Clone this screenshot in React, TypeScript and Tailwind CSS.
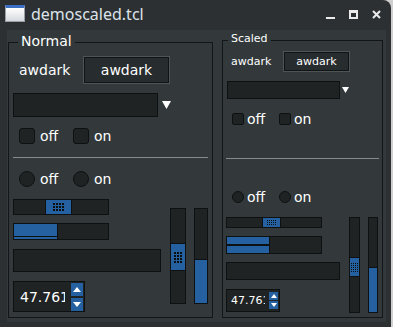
import React from 'react';

const FIELD = 'border border-[#0e1112] bg-[#1f2324]';
const BLUE = 'bg-[#2561a1]';

type GripKind = 'lgH' | 'lgV' | 'smH' | 'smV';

const GRIPS: Record<GripKind, { grid: string; dot: string; n: number }> = {
  lgH: { grid: 'grid grid-cols-4 gap-px', dot: 'w-[2px] h-[2px]', n: 12 },
  lgV: { grid: 'grid grid-cols-3 gap-px', dot: 'w-[2px] h-[2px]', n: 12 },
  smH: { grid: 'grid grid-cols-5 gap-px', dot: 'w-px h-px', n: 15 },
  smV: { grid: 'grid grid-cols-4 gap-px', dot: 'w-px h-px', n: 20 },
};

function Grip({ kind }: { kind: GripKind }) {
  const g = GRIPS[kind];
  return (
    <div className={g.grid}>
      {Array.from({ length: g.n }).map((_, i) => (
        <div key={i} className={`${g.dot} bg-[#0c0f10]`} />
      ))}
    </div>
  );
}

function Arrow({ w, h }: { w: number; h: number }) {
  return (
    <svg width={w} height={h} viewBox={`0 0 ${w} ${h}`}>
      <polygon points={`0,0 ${w},0 ${w / 2},${h}`} fill="#ffffff" />
    </svg>
  );
}

function UpDown({ up, w, h }: { up: boolean; w: number; h: number }) {
  return (
    <svg width={w} height={h} viewBox={`0 0 ${w} ${h}`}>
      <polygon
        points={up ? `0,${h} ${w},${h} ${w / 2},0` : `0,0 ${w},0 ${w / 2},${h}`}
        fill="#ffffff"
      />
    </svg>
  );
}

function TitleBar() {
  return (
    <div className="h-[30px] shrink-0 flex items-start">
      <div className="ml-[5px] mt-[5px] w-[20px] h-[17px] border border-[#9aa0a6] border-t-[3px] border-t-[#3b6fc4] bg-linear-to-b from-white to-[#d6dade]" />
      <span className="ml-[6px] mt-[4px] text-[16px] leading-[20px] text-[#dde3ea] font-['Noto_Sans',sans-serif]">
        demoscaled.tcl
      </span>
      <div className="ml-auto mr-[10px] mt-[10px] flex gap-[14px]">
        <svg width="9" height="9" viewBox="0 0 9 9">
          <rect x="0" y="7" width="9" height="2" fill="#ebebeb" />
        </svg>
        <svg width="9" height="9" viewBox="0 0 9 9">
          <path d="M0 0h9v9H0z M2 3h5v4H2z" fill="#ebebeb" fillRule="evenodd" />
        </svg>
        <svg width="9" height="9" viewBox="0 0 9 9">
          <path d="M1 1L8 8M8 1L1 8" stroke="#ebebeb" strokeWidth="2" />
        </svg>
      </div>
    </div>
  );
}

function NormalFrame() {
  return (
    <div className="relative w-[205px] h-[276px] border border-[#131618] flex flex-col text-[14px] leading-[16px]">
      <span className="absolute left-[9px] top-[-10px] px-[3px] bg-[#33393b]">Normal</span>

      <div className="mt-[13px] h-[28px] flex items-center">
        <span className="w-[74px] pl-[10px]">awdark</span>
        <div className="w-[87px] h-[28px] flex items-center justify-center border border-[#4f5457] bg-[#272c2e] shadow-[inset_0_0_0_1px_#111415]">
          awdark
        </div>
      </div>

      <div className="mt-[9px] ml-[4px] flex items-center">
        <div className={`w-[145px] h-[24px] ${FIELD}`} />
        <div className="ml-[4px] flex">
          <Arrow w={9} h={8} />
        </div>
      </div>

      <div className="mt-[11px] ml-[10px] h-[16px] flex items-center">
        <div className="w-[54px] flex items-center gap-[5px]">
          <div className={`w-[16px] h-[16px] rounded-[3px] ${FIELD}`} />
          <span>off</span>
        </div>
        <div className="flex items-center gap-[5px]">
          <div className={`w-[16px] h-[16px] rounded-[3px] ${FIELD}`} />
          <span>on</span>
        </div>
      </div>

      <div className="mt-[13px] ml-[4px] w-[195px] h-px bg-[#878b8e]" />

      <div className="mt-[13px] ml-[10px] h-[16px] flex items-center">
        <div className="w-[54px] flex items-center gap-[5px]">
          <div className={`w-[16px] h-[16px] rounded-full ${FIELD}`} />
          <span>off</span>
        </div>
        <div className="flex items-center gap-[5px]">
          <div className={`w-[16px] h-[16px] rounded-full ${FIELD}`} />
          <span>on</span>
        </div>
      </div>

      <div className="mt-[12px] ml-[4px] flex items-start">
        <div className="w-[148px] flex flex-col">
          <div className={`w-[96px] h-[16px] flex pl-[31px] ${FIELD}`}>
            <div className={`w-[27px] h-full border-x border-[#0e1112] flex items-center justify-center ${BLUE}`}>
              <Grip kind="lgH" />
            </div>
          </div>
          <div className={`mt-[8px] w-[96px] h-[17px] flex ${FIELD}`}>
            <div className="w-[44px] h-full flex flex-col border-r border-[#0e1112]">
              <div className={`flex-1 ${BLUE}`} />
              <div className="h-px bg-[#0e1112]" />
              <div className={`h-[2px] ${BLUE}`} />
            </div>
          </div>
          <div className={`mt-[9px] w-[148px] h-[23px] ${FIELD}`} />
          <div className={`mt-[9px] w-[72px] h-[31px] flex items-center ${FIELD}`}>
            <div className="w-[51px] pl-[6px] overflow-hidden whitespace-nowrap">47.761</div>
            <div className="ml-[6px] flex flex-col gap-[2px]">
              <div className={`w-[12px] h-[13px] flex items-center justify-center ${BLUE}`}>
                <UpDown up w={8} h={5} />
              </div>
              <div className={`w-[12px] h-[13px] flex items-center justify-center ${BLUE}`}>
                <UpDown up={false} w={8} h={5} />
              </div>
            </div>
          </div>
        </div>

        <div className={`ml-[9px] mt-[9px] w-[16px] h-[96px] flex flex-col pt-[34px] ${FIELD}`}>
          <div className={`h-[28px] border-y border-[#0e1112] flex items-center justify-center ${BLUE}`}>
            <Grip kind="lgV" />
          </div>
        </div>
        <div className={`ml-[8px] mt-[9px] w-[14px] h-[96px] flex flex-col justify-end ${FIELD}`}>
          <div className={`h-[44px] border-t border-[#0e1112] ${BLUE}`} />
        </div>
      </div>
    </div>
  );
}

function ScaledFrame() {
  return (
    <div className="relative w-[161px] h-[278px] border border-[#131618] flex flex-col text-[11px] leading-[13px]">
      <span className="absolute left-[5px] top-[-9px] px-[3px] bg-[#33393b]">Scaled</span>

      <div className="mt-[10px] h-[21px] flex items-center">
        <span className="w-[60px] pl-[8px]">awdark</span>
        <div className="w-[67px] h-[21px] flex items-center justify-center border border-[#4f5457] bg-[#272c2e] shadow-[inset_0_0_0_1px_#111415]">
          awdark
        </div>
      </div>

      <div className="mt-[9px] ml-[4px] flex items-center">
        <div className={`w-[113px] h-[18px] ${FIELD}`} />
        <div className="ml-[2px] flex">
          <Arrow w={7} h={6} />
        </div>
      </div>

      <div className="mt-[14px] ml-[9px] h-[12px] flex items-center text-[14px] leading-[16px]">
        <div className="w-[47px] flex items-center gap-[3px]">
          <div className={`w-[12px] h-[12px] rounded-[2px] ${FIELD}`} />
          <span>off</span>
        </div>
        <div className="flex items-center gap-[3px]">
          <div className={`w-[12px] h-[12px] rounded-[2px] ${FIELD}`} />
          <span>on</span>
        </div>
      </div>

      <div className="mt-[33px] ml-[3px] w-[153px] h-px bg-[#878b8e]" />

      <div className="mt-[32px] ml-[9px] h-[12px] flex items-center text-[14px] leading-[16px]">
        <div className="w-[47px] flex items-center gap-[3px]">
          <div className={`w-[12px] h-[12px] rounded-full ${FIELD}`} />
          <span>off</span>
        </div>
        <div className="flex items-center gap-[3px]">
          <div className={`w-[12px] h-[12px] rounded-full ${FIELD}`} />
          <span>on</span>
        </div>
      </div>

      <div className="mt-[14px] ml-[3px] flex items-start">
        <div className="w-[114px] flex flex-col">
          <div className={`w-[96px] h-[11px] flex pl-[35px] ${FIELD}`}>
            <div className={`w-[19px] h-full border-x border-[#0e1112] flex items-center justify-center ${BLUE}`}>
              <Grip kind="smH" />
            </div>
          </div>
          <div className={`mt-[8px] w-[96px] h-[18px] flex ${FIELD}`}>
            <div className="w-[43px] h-full flex flex-col border-r border-[#0e1112]">
              <div className={`flex-1 ${BLUE}`} />
              <div className="h-[2px] bg-[#0e1112]" />
              <div className={`h-[7px] ${BLUE}`} />
            </div>
          </div>
          <div className={`mt-[8px] w-[114px] h-[18px] ${FIELD}`} />
          <div className={`mt-[9px] w-[54px] h-[23px] flex items-center ${FIELD}`}>
            <div className="w-[38px] pl-[4px] overflow-hidden whitespace-nowrap">47.761</div>
            <div className="ml-[4px] flex flex-col gap-px">
              <div className={`w-[9px] h-[8px] flex items-center justify-center ${BLUE}`}>
                <UpDown up w={6} h={4} />
              </div>
              <div className={`w-[9px] h-[8px] flex items-center justify-center ${BLUE}`}>
                <UpDown up={false} w={6} h={4} />
              </div>
            </div>
          </div>
        </div>

        <div className={`ml-[9px] w-[11px] h-[96px] flex flex-col pt-[39px] ${FIELD}`}>
          <div className={`h-[20px] border-y border-[#0e1112] flex items-center justify-center ${BLUE}`}>
            <Grip kind="smV" />
          </div>
        </div>
        <div className={`ml-[8px] w-[10px] h-[96px] flex flex-col justify-end ${FIELD}`}>
          <div className={`h-[45px] border-t border-[#0e1112] ${BLUE}`} />
        </div>
      </div>
    </div>
  );
}

export default function App() {
  return (
    <div className="w-[393px] h-[327px] bg-[#cfcfcf] text-white font-['DejaVu_Sans',sans-serif]">
      <div className="w-[391px] h-[327px] bg-[#2c3032] rounded-tr-[8px] flex flex-col">
        <TitleBar />
        <div className="flex-1 flex pl-[7px] pr-[5px] pb-[5px]">
          <div className="flex-1 bg-[#33393b] flex items-end gap-[9px] pl-px pb-[4px]">
            <NormalFrame />
            <ScaledFrame />
          </div>
        </div>
      </div>
    </div>
  );
}
